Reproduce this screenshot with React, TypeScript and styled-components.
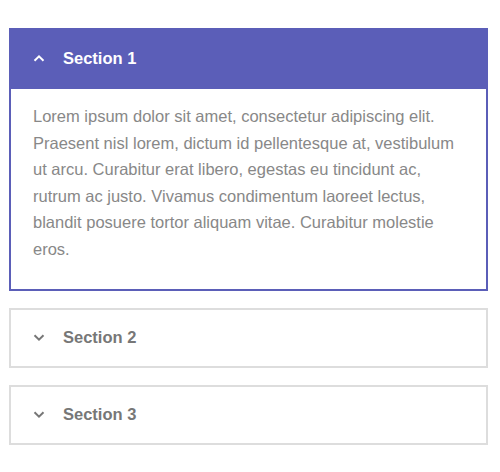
import { useState } from "react";
import styled, { createGlobalStyle } from "styled-components";

const GlobalStyle = createGlobalStyle`
  body {
    margin: 0;
    background: #ffffff;
    font-family: "Liberation Sans", Arial, sans-serif;
  }
`;

const sections = [
  {
    title: "Section 1",
    body: "Lorem ipsum dolor sit amet, consectetur adipiscing elit. Praesent nisl lorem, dictum id pellentesque at, vestibulum ut arcu. Curabitur erat libero, egestas eu tincidunt ac, rutrum ac justo. Vivamus condimentum laoreet lectus, blandit posuere tortor aliquam vitae. Curabitur molestie eros.",
  },
  { title: "Section 2", body: "Lorem ipsum dolor sit amet." },
  { title: "Section 3", body: "Lorem ipsum dolor sit amet." },
];

export default function App() {
  const [open, setOpen] = useState<number>(0);

  return (
    <>
      <GlobalStyle />
      <Accordion>
        {sections.map((s, i) => (
          <Item key={s.title} $open={open === i}>
            <Header $open={open === i} onClick={() => setOpen(open === i ? -1 : i)}>
              <Chevron viewBox="0 0 12 7" $open={open === i}>
                <path d="M1.5 1.2 L6 5.6 L10.5 1.2" />
              </Chevron>
              {s.title}
            </Header>
            {open === i && <Body>{s.body}</Body>}
          </Item>
        ))}
      </Accordion>
    </>
  );
}

const Accordion = styled.div`
  display: flex;
  flex-direction: column;
  gap: 17px;
  width: 479px;
  margin: 28px 0 0 9px;
`;

const Item = styled.div<{ $open: boolean }>`
  border: 2px solid ${(p) => (p.$open ? "#5b5eb8" : "#dddddd")};
  border-top: ${(p) => (p.$open ? "none" : "2px solid #dddddd")};
  background: #fff;
`;

const Header = styled.div<{ $open: boolean }>`
  display: flex;
  align-items: center;
  gap: 18px;
  height: ${(p) => (p.$open ? "61px" : "56px")};
  padding: 0 22px;
  margin: ${(p) => (p.$open ? "0 -2px" : "0")};
  padding-left: ${(p) => (p.$open ? "24px" : "22px")};
  box-sizing: border-box;
  background: ${(p) => (p.$open ? "#5b5eb8" : "#fff")};
  color: ${(p) => (p.$open ? "#ffffff" : "#777777")};
  font-size: 16.5px;
  font-weight: bold;
  cursor: pointer;
`;

const Chevron = styled.svg<{ $open: boolean }>`
  width: 12px;
  height: 7px;
  fill: none;
  stroke: currentColor;
  stroke-width: 2;
  transform: ${(p) => (p.$open ? "rotate(180deg)" : "none")};
`;

const Body = styled.div`
  padding: 14px 22px 26px;
  color: #888888;
  font-size: 16.5px;
  line-height: 26.6px;
`;
